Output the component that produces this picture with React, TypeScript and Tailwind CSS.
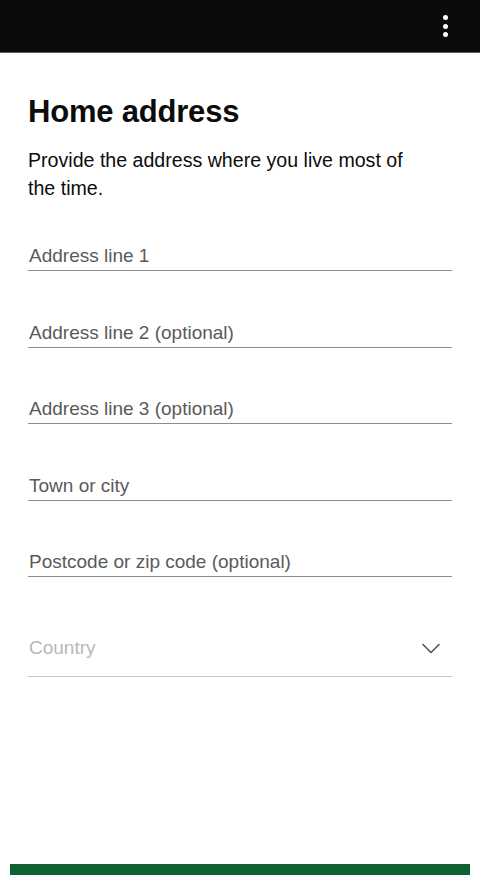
import React from "react";

const fields = [
  "Address line 1",
  "Address line 2 (optional)",
  "Address line 3 (optional)",
  "Town or city",
  "Postcode or zip code (optional)",
];

export default function App() {
  return (
    <div
      className="flex h-[875px] w-[480px] flex-col overflow-hidden bg-white"
      style={{ fontFamily: '"Liberation Sans", Arial, sans-serif' }}
    >
      <header className="flex h-[53px] shrink-0 items-center justify-end border-b border-[#5a5a5a] bg-[#0b0b0b] pr-[32px]">
        <div className="flex flex-col items-center gap-[3.5px]">
          <span className="block h-[5px] w-[5px] rounded-full bg-white" />
          <span className="block h-[5px] w-[5px] rounded-full bg-white" />
          <span className="block h-[5px] w-[5px] rounded-full bg-white" />
        </div>
      </header>

      <main className="flex flex-col px-7 pt-[41px]">
        <h1 className="text-[31px] font-bold leading-[36px] tracking-[-0.2px] text-[#0b0c0c]">
          Home address
        </h1>
        <p className="mt-4 w-[400px] text-[19.6px] leading-[28px] text-[#0b0c0c]">
          Provide the address where you live most of the time.
        </p>

        <div className="mt-[40px] flex flex-col gap-[47.5px]">
          {fields.map((f) => (
            <div key={f} className="border-b border-[#8c8c8c] pt-[2px] pb-[2px]">
              <div className="pl-px text-[19px] leading-[24px] text-[#5a5a5a]">{f}</div>
            </div>
          ))}
        </div>

        <div className="mt-[59px] flex items-center justify-between border-b border-[#c8c8c8] pb-4">
          <div className="pl-px text-[19px] leading-[24px] text-[#b8b8b8]">Country</div>
          <svg
            width="18"
            height="11"
            viewBox="0 0 18 11"
            className="mr-[12px] mt-[1px]"
            fill="none"
            stroke="#555"
            strokeWidth="1.6"
            strokeLinecap="round"
            strokeLinejoin="round"
          >
            <path d="M1 1.5 L9 9.5 L17 1.5" />
          </svg>
        </div>
      </main>

      <div className="mt-auto h-[11px] shrink-0 overflow-hidden px-[10px]">
        <div className="h-[48px] bg-[#0f6333]" />
      </div>
    </div>
  );
}
